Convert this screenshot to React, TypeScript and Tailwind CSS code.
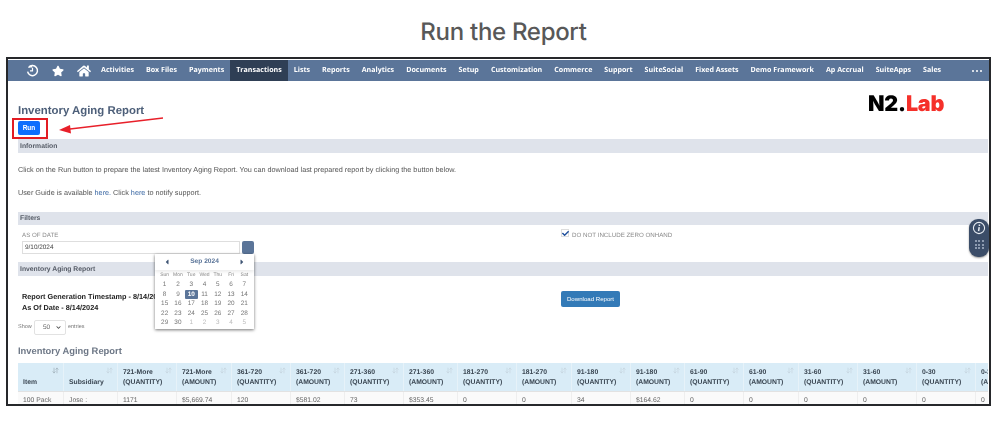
import { FaStar, FaHome, FaCheck, FaChevronDown, FaCaretLeft, FaCaretRight } from "react-icons/fa";
import { ArrowDownUp } from "lucide-react";

const navItems = ["Activities","Box Files","Payments","Transactions","Lists","Reports","Analytics","Documents","Setup","Customization","Commerce","Support","SuiteSocial","Fixed Assets","Demo Framework","Ap Accrual","SuiteApps","Sales"];

const cols: [string, string, string][] = [
  ["721-More","(QUANTITY)","1171"],["721-More","(AMOUNT)","$5,669.74"],
  ["361-720","(QUANTITY)","120"],["361-720","(AMOUNT)","$581.02"],
  ["271-360","(QUANTITY)","73"],["271-360","(AMOUNT)","$353.45"],
  ["181-270","(QUANTITY)","0"],["181-270","(AMOUNT)","0"],
  ["91-180","(QUANTITY)","34"],["91-180","(AMOUNT)","$164.62"],
  ["61-90","(QUANTITY)","0"],["61-90","(AMOUNT)","0"],
  ["31-60","(QUANTITY)","0"],["31-60","(AMOUNT)","0"],
  ["0-30","(QUANTITY)","0"],["0-30","(AMOUNT)","0"],
];

const days = ["Sun","Mon","Tue","Wed","Thu","Fri","Sat"];
const dates: [number, boolean][] = [
  ...Array.from({ length: 30 }, (_, i) => [i + 1, true] as [number, boolean]),
  ...[1,2,3,4,5].map((d) => [d, false] as [number, boolean]),
];

const grid = "grid grid-cols-[46px_54px_59px_55px_59px_54px_59px_54px_59px_55px_59px_54px_59px_55px_59px_59px_59px_59px]";

function Bar({ children }: { children: React.ReactNode }) {
  return (
    <div className="flex items-center pl-[2px] bg-[#dfe3eb] text-[6.8px] font-bold text-[#555b66] [font-family:'Liberation_Sans',sans-serif]">
      {children}
    </div>
  );
}

function Sort({ dark }: { dark?: boolean }) {
  return <ArrowDownUp className={"absolute right-[4px] top-[4px] " + (dark ? "text-[#7f8b96]" : "text-[#b9c6cf]")} size={7} strokeWidth={1.5} />;
}

export default function App() {
  return (
    <div className="w-[1000px] h-[432px] bg-white overflow-hidden [font-family:'Liberation_Sans',sans-serif] [text-rendering:geometricPrecision]">
      <h1 className="h-[57px] pt-[16px] pl-[7px] text-center text-[24px] leading-[32px] font-[550] text-[#585858] [font-family:Inter,sans-serif] tracking-[-0.3px]">
        Run the Report
      </h1>

      <div className="relative ml-[6px] w-[985px] h-[349px] border-2 border-[#26282b] overflow-hidden bg-white pt-[1px] blur-[0.35px]">
        <nav className="flex items-center h-[21px] bg-[#5b7599] text-white text-[7.1px] font-bold [font-family:'Open_Sans',sans-serif]">
          <div className="flex items-center w-[87px] shrink-0 pl-[18px]">
            <svg width="13" height="13" viewBox="0 0 13 13" fill="none" stroke="white" strokeWidth="1.5" className="shrink-0">
              <path d="M2.5 3.6 A5 5 0 1 1 1.6 7.6" />
              <path d="M6.2 0.4 L6.2 3.4 L3.2 3.4" fill="white" stroke="none" />
              <path d="M6.5 3.8 V6.9 H4" strokeWidth="1.2" />
            </svg>
            <FaStar className="ml-[13px] shrink-0" size={12} />
            <FaHome className="ml-[13px] shrink-0" size={14} />
          </div>
          <div className="flex h-full items-center">
            {navItems.map((n) => (
              <div key={n} className={"flex items-center h-full px-[6px] whitespace-nowrap " + (n === "Transactions" ? "bg-[#2f3f55]" : "")}>
                {n}
              </div>
            ))}
          </div>
          <div className="ml-auto mr-[7px] flex gap-[2px]">
            <span className="size-[2px] rounded-full bg-white" />
            <span className="size-[2px] rounded-full bg-white" />
            <span className="size-[2px] rounded-full bg-white" />
          </div>
        </nav>

        <div className="pl-[10px] pr-[1px]">
          <h2 className="pt-[23px] h-[40px] text-[11.4px] leading-[15px] font-bold text-[#4d5f79]">Inventory Aging Report</h2>
          <button className="block h-[14px] w-[22px] rounded-[2px] bg-[#0d6efd] text-white text-[6.5px] font-bold leading-[14px] text-center">Run</button>
          <div className="h-[4px]" />
          <Bar><span className="h-[14px] leading-[15px]">Information</span></Bar>
          <p className="mt-[10px] h-[12px] text-[7.25px] leading-[13px] text-[#555555]">
            Click on the Run button to prepare the latest Inventory Aging Report. You can download last prepared report by clicking the button below.
          </p>
          <p className="mt-[11px] h-[12px] text-[7.25px] leading-[13px] text-[#555555]">
            User Guide is available <span className="text-[#3d6aa5]">here.</span> Click <span className="text-[#3d6aa5]">here</span> to notify support.
          </p>
          <div className="h-[14px]" />
          <Bar><span className="h-[13px] leading-[14px]">Filters</span></Bar>

          <div className="flex h-[37px]">
            <div className="w-[543px] pl-[4px] pt-[6px]">
              <div className="text-[6.2px] leading-[10px] text-[#8a8a8a]">AS OF DATE</div>
              <div className="flex">
                <div className="w-[218px] h-[13px] border border-[#dedede] pl-[2px] text-[6.4px] leading-[11px] text-[#444]">9/10/2024</div>
                <div className="ml-[2px] w-[12px] h-[13px] rounded-[2px] bg-[#5b7599]" />
              </div>
            </div>
            <div className="flex items-start pt-[4px]">
              <div className="relative size-[8px] border border-[#dddddd] bg-white">
                <FaCheck className="absolute -left-[0.5px] -top-[0.5px] text-[#1f4f9c]" size={7} />
              </div>
              <span className="ml-[3px] mt-[2px] text-[6.2px] leading-[9px] text-[#8a8a8a]">DO NOT INCLUDE ZERO ONHAND</span>
            </div>
          </div>

          <Bar><span className="h-[14px] leading-[15px]">Inventory Aging Report</span></Bar>

          <div className="flex h-[44px]">
            <div className="w-[543px] pl-[4px] pt-[15px] text-[7.3px] leading-[11px] font-bold text-[#222]">
              <div>Report Generation Timestamp - 8/14/2024</div>
              <div>As Of Date - 8/14/2024</div>
            </div>
            <div className="pt-[15px]">
              <button className="block w-[59px] h-[16px] rounded-[2px] bg-[#337ab7] text-white text-[6.1px] leading-[16px] text-center">Download Report</button>
            </div>
          </div>

          <div className="flex items-center h-[15px] text-[5.5px] text-[#777]">
            <span className="w-[16px]">Show</span>
            <div className="flex items-center justify-between w-[32px] h-[15px] border border-[#e2e2e2] rounded-[2px] pl-[8px] pr-[4px] text-[6.5px] text-[#666]">
              <span>50</span>
              <FaChevronDown size={5} className="text-[#444]" />
            </div>
            <span className="ml-[2px]">entries</span>
          </div>

          <h3 className="mt-[9px] h-[19px] text-[9.4px] leading-[14px] font-bold text-[#6e7887]">Inventory Aging Report</h3>

          <div className="overflow-hidden">
            <div className={grid + " w-[1020px] h-[28px] bg-[#d9ecf7] text-[6.8px] leading-[10px] font-bold text-[#3a4652]"}>
              <div className="relative flex items-end pl-[5px] pb-[3px] border-r border-[#e6f2f9]">Item<Sort dark /></div>
              <div className="relative flex items-end pl-[5px] pb-[3px] border-r border-[#e6f2f9]">Subsidiary<Sort /></div>
              {cols.map((c, i) => (
                <div key={i} className="relative flex flex-col justify-end pl-[5px] pb-[3px] border-r border-[#e6f2f9]">
                  <span>{c[0]}</span>
                  <span>{c[1]}</span>
                  <Sort />
                </div>
              ))}
            </div>
            <div className={grid + " w-[1020px] h-[14px] overflow-hidden bg-[#fafafa] border-t border-[#e2e2e2] text-[6.8px] leading-[18px] text-[#666]"}>
              <div className="pl-[5px] border-r border-[#eeeeee]">100 Pack</div>
              <div className="pl-[5px] border-r border-[#eeeeee]">Jose :</div>
              {cols.map((c, i) => (
                <div key={i} className="pl-[5px] border-r border-[#eeeeee]">{c[2]}</div>
              ))}
            </div>
          </div>
        </div>

        {/* overlays */}
        <div className="absolute left-[860px] top-[32px] text-[21.5px] leading-[26px] font-black tracking-[-0.2px] text-black [font-family:Inter,sans-serif]">
          N2.<span className="text-[#f5302a]">Lab</span>
        </div>

        <div className="absolute left-[4px] top-[59px] w-[36px] h-[21px] border-2 border-[#e21c23]" />
        <svg className="absolute left-[50px] top-[55px]" width="108" height="22" viewBox="0 0 108 22">
          <path d="M105 4 L12 15" stroke="#e8202a" strokeWidth="1.5" fill="none" />
          <path d="M1 16 L12 11 L13 19.5 Z" fill="#e8202a" />
        </svg>

        <div className="absolute left-[147px] top-[195px] w-[99px] h-[75px] bg-white shadow-[0_1px_3px_rgba(0,0,0,0.55)] text-[#777]">
          <div className="flex items-center justify-between h-[16px] px-[8px] shadow-[0_2px_3px_rgba(0,0,0,0.08)] text-[#5b7599]">
            <FaCaretLeft size={8} className="text-[#3f5574]" />
            <span className="text-[6.6px] font-bold">Sep 2024</span>
            <FaCaretRight size={8} className="text-[#3f5574]" />
          </div>
          <div className="grid grid-cols-7 px-[3px] pt-[1px] text-center text-[5px] leading-[9px] text-[#888]">
            {days.map((d) => <span key={d}>{d}</span>)}
          </div>
          <div className="grid grid-cols-7 px-[3px] text-center text-[6.4px] leading-[9.6px]">
            {dates.map(([d, cur], i) => (
              <span key={i} className={d === 10 && cur ? "bg-[#5b7599] text-white font-bold rounded-[1px]" : cur ? "" : "text-[#bdbdbd]"}>{d}</span>
            ))}
          </div>
        </div>

        <div className="absolute left-[961px] top-[160px] w-[20px] h-[38px] rounded-[9px] bg-[#3b4d68] shadow-[0_1px_2px_rgba(0,0,0,0.4)] flex flex-col items-center pt-[2px]">
          <svg width="14" height="14" viewBox="0 0 14 14" fill="none">
            <circle cx="7" cy="7" r="5.6" stroke="#e8edf3" strokeWidth="1.1" />
            <path d="M7.4 3.6v1.4M7.2 6.2 6.6 10.2" stroke="#e8edf3" strokeWidth="1.5" />
          </svg>
          <div className="grid grid-cols-3 gap-[1.5px] mt-[5px]">
            {Array.from({ length: 9 }).map((_, i) => (
              <span key={i} className="size-[2px] bg-[#8d9bb0]" />
            ))}
          </div>
        </div>
      </div>
    </div>
  );
}
